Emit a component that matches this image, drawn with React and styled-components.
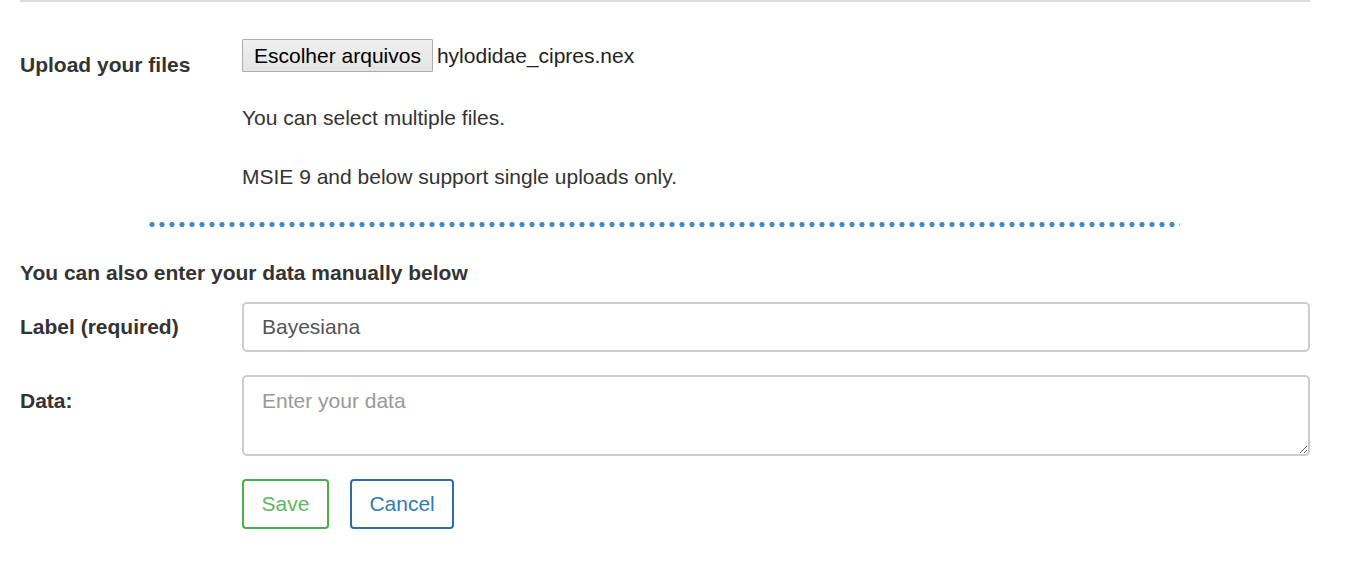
import React, { useState } from 'react';
import styled, { createGlobalStyle } from 'styled-components';

const GlobalStyle = createGlobalStyle`
  body {
    margin: 0;
    background: #fff;
    font-family: "Liberation Sans", Arial, sans-serif;
    color: #333;
  }
`;

const Page = styled.div`
  width: 1290px;
  margin-left: 20px;
  border-top: 2px solid #ddd;
`;

const UploadRow = styled.div`
  display: grid;
  grid-template-columns: 222px 1fr;
  padding-top: 37px;
`;

const Label = styled.label`
  font-size: 21px;
  font-weight: bold;
  line-height: 20px;
  padding-top: ${(p) => p.$top || 0}px;
  align-self: ${(p) => p.$center ? 'center' : 'start'};
`;

const FileLine = styled.div`
  display: flex;
  align-items: center;
  gap: 4px;
  font-size: 21px;
  color: #222;
`;

const FileButton = styled.button`
  height: 33px;
  padding: 0 11px;
  font-family: inherit;
  font-size: 21px;
  color: #000;
  background: linear-gradient(#f0f0f0, #e4e4e4);
  border: 1px solid #adadad;
  border-radius: 1px;
`;

const Help = styled.p`
  margin: ${(p) => p.$top}px 0 0;
  font-size: 21px;
  line-height: 20px;
`;

const Dots = styled.div`
  margin: 35px 0 0 128px;
  width: 1032px;
  height: 5px;
  background-image: radial-gradient(circle, #428bca 2.3px, transparent 2.9px);
  background-size: 10px 5px;
  background-position: -1px 0;
`;

const SectionTitle = styled.h3`
  margin: 36px 0 0;
  font-size: 21px;
  font-weight: bold;
  line-height: 20px;
`;

const FieldRow = styled.div`
  display: grid;
  grid-template-columns: 222px 1fr;
  margin-top: ${(p) => p.$top}px;
`;

const fieldBase = `
  box-sizing: border-box;
  width: 100%;
  border: 2px solid #ccc;
  border-radius: 5px;
  font-family: inherit;
  font-size: 21px;
  color: #555;
  padding: 0 18px;
  outline: none;
  &::placeholder { color: #999; }
`;

const TextInput = styled.input`
  ${fieldBase}
  height: 50px;
`;

const TextArea = styled.textarea`
  ${fieldBase}
  height: 81px;
  padding-top: 12px;
  line-height: 24px;
  resize: vertical;
  display: block;
`;

const Actions = styled.div`
  display: flex;
  gap: 21px;
  margin: 23px 0 0 222px;
`;

const OutlineButton = styled.button`
  height: 50px;
  padding: 0 17.5px;
  font-family: inherit;
  font-size: 21px;
  background: #fff;
  color: ${(p) => p.$color};
  border: 2px solid ${(p) => p.$border};
  border-radius: 4px;
  cursor: pointer;
`;

export default function App() {
  const [label, setLabel] = useState('Bayesiana');
  const [data, setData] = useState('');

  return (
    <>
      <GlobalStyle />
      <Page>
        <UploadRow>
          <Label $top={16}>Upload your files</Label>
          <div>
            <FileLine>
              <FileButton type="button">Escolher arquivos</FileButton>
              <span>hylodidae_cipres.nex</span>
            </FileLine>
            <Help $top={36}>You can select multiple files.</Help>
            <Help $top={39}>MSIE 9 and below support single uploads only.</Help>
          </div>
        </UploadRow>
        <Dots />
        <SectionTitle>You can also enter your data manually below</SectionTitle>
        <FieldRow $top={19}>
          <Label $center>Label (required)</Label>
          <TextInput value={label} onChange={(e) => setLabel(e.target.value)} />
        </FieldRow>
        <FieldRow $top={23}>
          <Label $top={16}>Data:</Label>
          <TextArea
            placeholder="Enter your data"
            value={data}
            onChange={(e) => setData(e.target.value)}
          />
        </FieldRow>
        <Actions>
          <OutlineButton $color="#5cb85c" $border="#4cae4c">Save</OutlineButton>
          <OutlineButton $color="#337ab7" $border="#2e6da4">Cancel</OutlineButton>
        </Actions>
      </Page>
    </>
  );
}
